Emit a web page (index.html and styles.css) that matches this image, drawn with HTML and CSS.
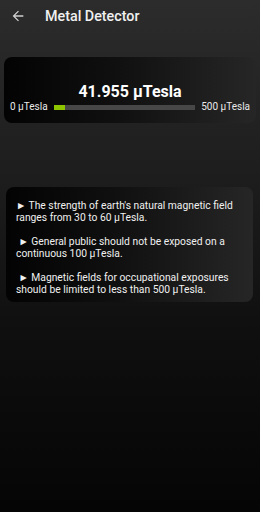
FILE: index.html
```html
<!DOCTYPE html>
<html>
<head>
<meta charset="utf-8">
<link rel="stylesheet" href="styles.css">
</head>
<body>
<div class="screen">
  <header class="appbar">
    <svg class="back" width="16" height="16" viewBox="0 0 24 24"><path d="M20 11H7.83l5.59-5.59L12 4l-8 8 8 8 1.41-1.41L7.83 13H20v-2z" fill="#cfcfcf"/></svg>
    <h1 class="title">Metal Detector</h1>
  </header>
  <section class="card reading">
    <div class="value">41.955 μTesla</div>
    <div class="scale">
      <span class="lbl">0 μTesla</span>
      <div class="track"><div class="fill" style="width:8.4%"></div></div>
      <span class="lbl">500 μTesla</span>
    </div>
  </section>
  <section class="card info">
    <p>&#9658; The strength of earth's natural magnetic field ranges from 30 to 60 μTesla.</p>
    <p>&nbsp;&#9658; General public should not be exposed on a continuous 100 μTesla.</p>
    <p>&nbsp;&#9658; Magnetic fields for occupational exposures should be limited to less than 500 μTesla.</p>
  </section>
</div>
</body>
</html>
```
FILE: styles.css
```css
* { box-sizing: border-box; }
html, body { margin: 0; padding: 0; }
body {
  width: 260px;
  height: 512px;
  font-family: Roboto, "Liberation Sans", sans-serif;
  color: #f2f2f2;
  background: linear-gradient(to bottom, #2c2c2c 0%, #1d1d1d 35%, #0f0f0f 65%, #050505 100%);
  overflow: hidden;
}
.screen { display: flex; flex-direction: column; }
.appbar {
  height: 32px;
  display: flex;
  align-items: center;
  padding-left: 10px;
}
.back { flex: none; margin-top: -1px; }
.title {
  margin: 0 0 0 19px;
  font-size: 14.3px;
  font-weight: 500;
  color: #f0f0f0;
}
.card {
  border-radius: 8px;
  background: linear-gradient(to right, #030303 0%, #101010 45%, #262626 100%);
}
.reading {
  margin: 25px 4px 0 4px;
  height: 66px;
  padding-top: 25px;
}
.value {
  text-align: center;
  font-size: 16px;
  font-weight: 700;
  line-height: 20px;
  color: #fff;
}
.scale {
  display: flex;
  align-items: center;
  padding: 0 6px 0 6px;
  margin-top: -1px;
}
.lbl {
  font-size: 10px;
  color: #e8e8e8;
  line-height: 12px;
}
.track {
  flex: 1;
  height: 5px;
  margin: 0 6px 0 6px;
  background: #474747;
}
.fill { height: 100%; background: #8dc400; }
.info {
  margin: 64px 7px 0 6px;
  padding: 13px 8px 8px 10px;
  height: 115px;
}
.info p {
  margin: 0 0 12px 0;
  font-size: 10.3px;
  line-height: 12px;
  color: #f0f0f0;
}
.info p:last-child { margin-bottom: 0; }
```
